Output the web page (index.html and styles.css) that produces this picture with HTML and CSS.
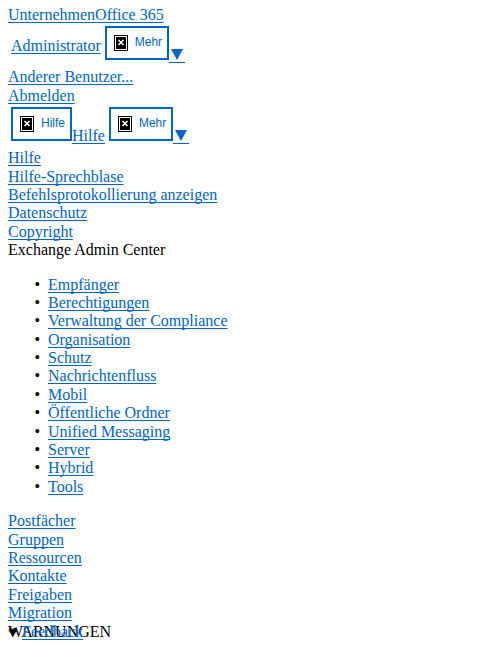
FILE: index.html
```html
<!DOCTYPE html>
<html lang="de">
<head>
  <meta charset="UTF-8">
  <meta name="viewport" content="width=device-width, initial-scale=1.0">
  <title>Exchange Admin Center</title>
  <link rel="stylesheet" href="styles.css">
</head>
<body>
  <svg class="symbols" aria-hidden="true">
    <symbol id="missing" viewBox="0 0 14 16">
      <path fill="#000" d="M0 0h14v16H0z"/>
      <path fill="#fff" d="M1 1h12v14H1z"/>
      <path fill="#000" d="M2 2h10v12H2z"/>
      <path stroke="#fff" stroke-width="1.6" d="M4.5 5l5 5M9.5 5l-5 5"/>
    </symbol>
    <symbol id="arrow" viewBox="0 0 12 12">
      <path fill="#0066cc" d="M0 1h12L6 12z"/>
    </symbol>
  </svg>

  <header>
    <div><a href="#">Unternehmen</a><a href="#">Office 365</a></div>
    <div class="toolbar">
      <a href="#" class="name">Administrator</a>
      <a href="#" class="more"><span class="alt"><svg class="missing"><use href="#missing"/></svg>Mehr</span><span class="drop"><svg class="arrow"><use href="#arrow"/></svg></span></a>
    </div>
    <div><a href="#">Anderer Benutzer...</a></div>
    <div><a href="#">Abmelden</a></div>
    <div class="toolbar">
      <a href="#" class="help"><span class="alt"><svg class="missing"><use href="#missing"/></svg>Hilfe</span><span class="name">Hilfe</span></a>
      <a href="#" class="more"><span class="alt"><svg class="missing"><use href="#missing"/></svg>Mehr</span><span class="drop"><svg class="arrow"><use href="#arrow"/></svg></span></a>
    </div>
    <div><a href="#">Hilfe</a></div>
    <div><a href="#">Hilfe-Sprechblase</a></div>
    <div><a href="#">Befehlsprotokollierung anzeigen</a></div>
    <div><a href="#">Datenschutz</a></div>
    <div><a href="#">Copyright</a></div>
  </header>

  <div>Exchange Admin Center</div>
  <ul>
    <li><a href="#">Empfänger</a></li>
    <li><a href="#">Berechtigungen</a></li>
    <li><a href="#">Verwaltung der Compliance</a></li>
    <li><a href="#">Organisation</a></li>
    <li><a href="#">Schutz</a></li>
    <li><a href="#">Nachrichtenfluss</a></li>
    <li><a href="#">Mobil</a></li>
    <li><a href="#">Öffentliche Ordner</a></li>
    <li><a href="#">Unified Messaging</a></li>
    <li><a href="#">Server</a></li>
    <li><a href="#">Hybrid</a></li>
    <li><a href="#">Tools</a></li>
  </ul>

  <nav>
    <div><a href="#">Postfächer</a></div>
    <div><a href="#">Gruppen</a></div>
    <div><a href="#">Ressourcen</a></div>
    <div><a href="#">Kontakte</a></div>
    <div><a href="#">Freigaben</a></div>
    <div><a href="#">Migration</a></div>
  </nav>

  <div class="alerts">
    <div>WARNUNGEN</div>
    <div class="feedback"><span class="heart">♥</span><a href="#">Feedback</a></div>
  </div>
</body>
</html>
```

FILE: styles.css
```css
body {
  margin: 6px 8px 0;
  background-color: #fff;
  color: #000;
  font-family: "Liberation Serif", "Times New Roman", serif;
  font-size: 16px;
  line-height: 1.15;
}
a {
  color: #0066cc;
  text-underline-offset: 2px;
  text-decoration-thickness: 1px;
  text-decoration-skip-ink: none;
}
ul {
  margin: 16px 0;
  padding-left: 40px;
  list-style-type: "•\a0\a0";
}
.symbols {
  position: absolute;
  width: 0;
  height: 0;
}

/* link rows with image placeholders */
.toolbar {
  display: flex;
  align-items: flex-start;
  gap: 4px;
  height: 44px;
  padding: 2px 3px 0;
  box-sizing: border-box;
}
.toolbar a {
  display: flex;
  align-items: flex-start;
  text-decoration: none;
}
.toolbar .name {
  text-decoration: underline;
  text-underline-offset: 2px;
  text-decoration-thickness: 1px;
  margin-top: 11px;
}
.toolbar .help .name {
  margin-top: 20px;
}
.alt {
  display: flex;
  align-items: flex-start;
  gap: 7px;
  height: 34px;
  padding: 7px 5px 7px 7px;
  border: 2px solid #0066cc;
  box-sizing: border-box;
  font-family: "Liberation Sans", Arial, sans-serif;
  font-size: 12px;
  line-height: 14px;
}
.missing {
  width: 14px;
  height: 16px;
}
.drop {
  display: flex;
  justify-content: center;
  width: 16px;
  height: 14px;
  margin-top: 22px;
  border-bottom: 1px solid #0066cc;
}
.arrow {
  width: 12px;
  height: 12px;
}

/* feedback link floats over the alerts */
.alerts {
  position: relative;
}
.feedback {
  position: absolute;
  top: 0;
  left: 0;
  display: flex;
}
.heart {
  width: 14px;
}
```
